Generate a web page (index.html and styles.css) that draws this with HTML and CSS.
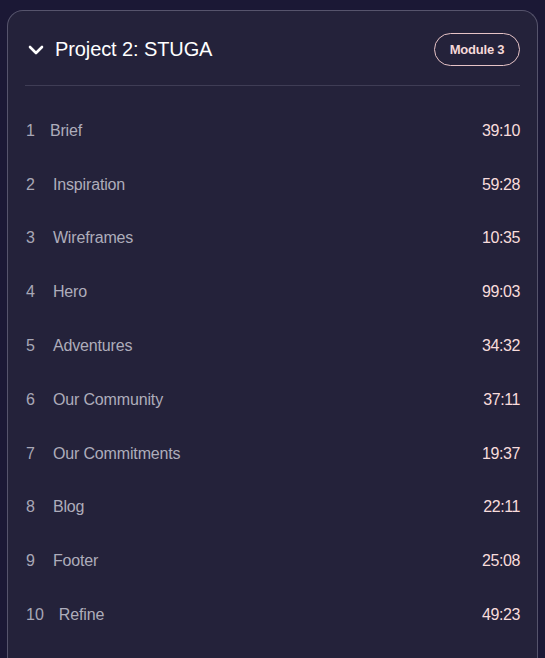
FILE: index.html
```html
<!DOCTYPE html>
<html lang="en">
<head>
<meta charset="utf-8">
<title>Project 2: STUGA</title>
<link rel="stylesheet" href="styles.css">
</head>
<body>
<section class="card">
  <header class="card-head">
    <div class="title-wrap">
      <svg class="chevron" width="20" height="20" viewBox="0 0 20 20" aria-hidden="true">
        <polyline points="4,7 10,13 16,7" fill="none" stroke="#ffffff" stroke-width="2.6" stroke-linecap="round" stroke-linejoin="round"/>
      </svg>
      <h2 class="title">Project 2: STUGA</h2>
    </div>
    <span class="badge">Module 3</span>
  </header>
  <ol class="lessons">
    <li class="lesson"><span class="num num-narrow">1</span><span class="name">Brief</span><span class="time">39:10</span></li>
    <li class="lesson"><span class="num">2</span><span class="name">Inspiration</span><span class="time">59:28</span></li>
    <li class="lesson"><span class="num">3</span><span class="name">Wireframes</span><span class="time">10:35</span></li>
    <li class="lesson"><span class="num">4</span><span class="name">Hero</span><span class="time">99:03</span></li>
    <li class="lesson"><span class="num">5</span><span class="name">Adventures</span><span class="time">34:32</span></li>
    <li class="lesson"><span class="num">6</span><span class="name">Our Community</span><span class="time">37:11</span></li>
    <li class="lesson"><span class="num">7</span><span class="name">Our Commitments</span><span class="time">19:37</span></li>
    <li class="lesson"><span class="num">8</span><span class="name">Blog</span><span class="time">22:11</span></li>
    <li class="lesson"><span class="num">9</span><span class="name">Footer</span><span class="time">25:08</span></li>
    <li class="lesson"><span class="num num-narrow">10</span><span class="name">Refine</span><span class="time">49:23</span></li>
  </ol>
</section>
</body>
</html>
```

FILE: styles.css
```css
* { box-sizing: border-box; }

html, body {
  margin: 0;
  padding: 0;
  background: #1b1835;
  font-family: "Liberation Sans", Arial, sans-serif;
  height: 100%;
  overflow: hidden;
}

.card {
  margin: 10px 7px 0 7px;
  background: #24223a;
  border: 1px solid #56546c;
  border-bottom: none;
  border-radius: 16px 16px 0 0;
  padding: 22px 17px 0 17px;
  height: calc(100% - 10px);
  overflow: hidden;
}

.card-head {
  display: flex;
  align-items: center;
  justify-content: space-between;
  height: 33px;
}

.title-wrap {
  display: flex;
  align-items: center;
  gap: 9px;
}

.chevron {
  display: block;
  margin-left: 1px;
}

.title {
  margin: 0;
  font-size: 20px;
  font-weight: 400;
  color: #ffffff;
  letter-spacing: -0.1px;
}

.badge {
  display: inline-flex;
  align-items: center;
  justify-content: center;
  width: 86px;
  height: 33px;
  border: 1px solid #e6c3c6;
  border-radius: 17px;
  color: #f6d9d9;
  font-size: 13px;
  font-weight: 700;
  letter-spacing: -0.2px;
}

.lessons {
  list-style: none;
  margin: 19px 0 0 0;
  padding: 18px 0 0 0;
  border-top: 1px solid #3f3d55;
}

.lesson {
  display: flex;
  align-items: center;
  height: 53.8px;
  font-size: 16px;
  padding-left: 1px;
}

.num {
  color: #a8a7b6;
  margin-right: 18px;
}

.num-narrow {
  margin-right: 15px;
}

.name {
  color: #aeadbb;
  flex: 1;
  letter-spacing: -0.15px;
}

.time {
  color: #f8dcdc;
  font-size: 16px;
  letter-spacing: -0.4px;
}
```
